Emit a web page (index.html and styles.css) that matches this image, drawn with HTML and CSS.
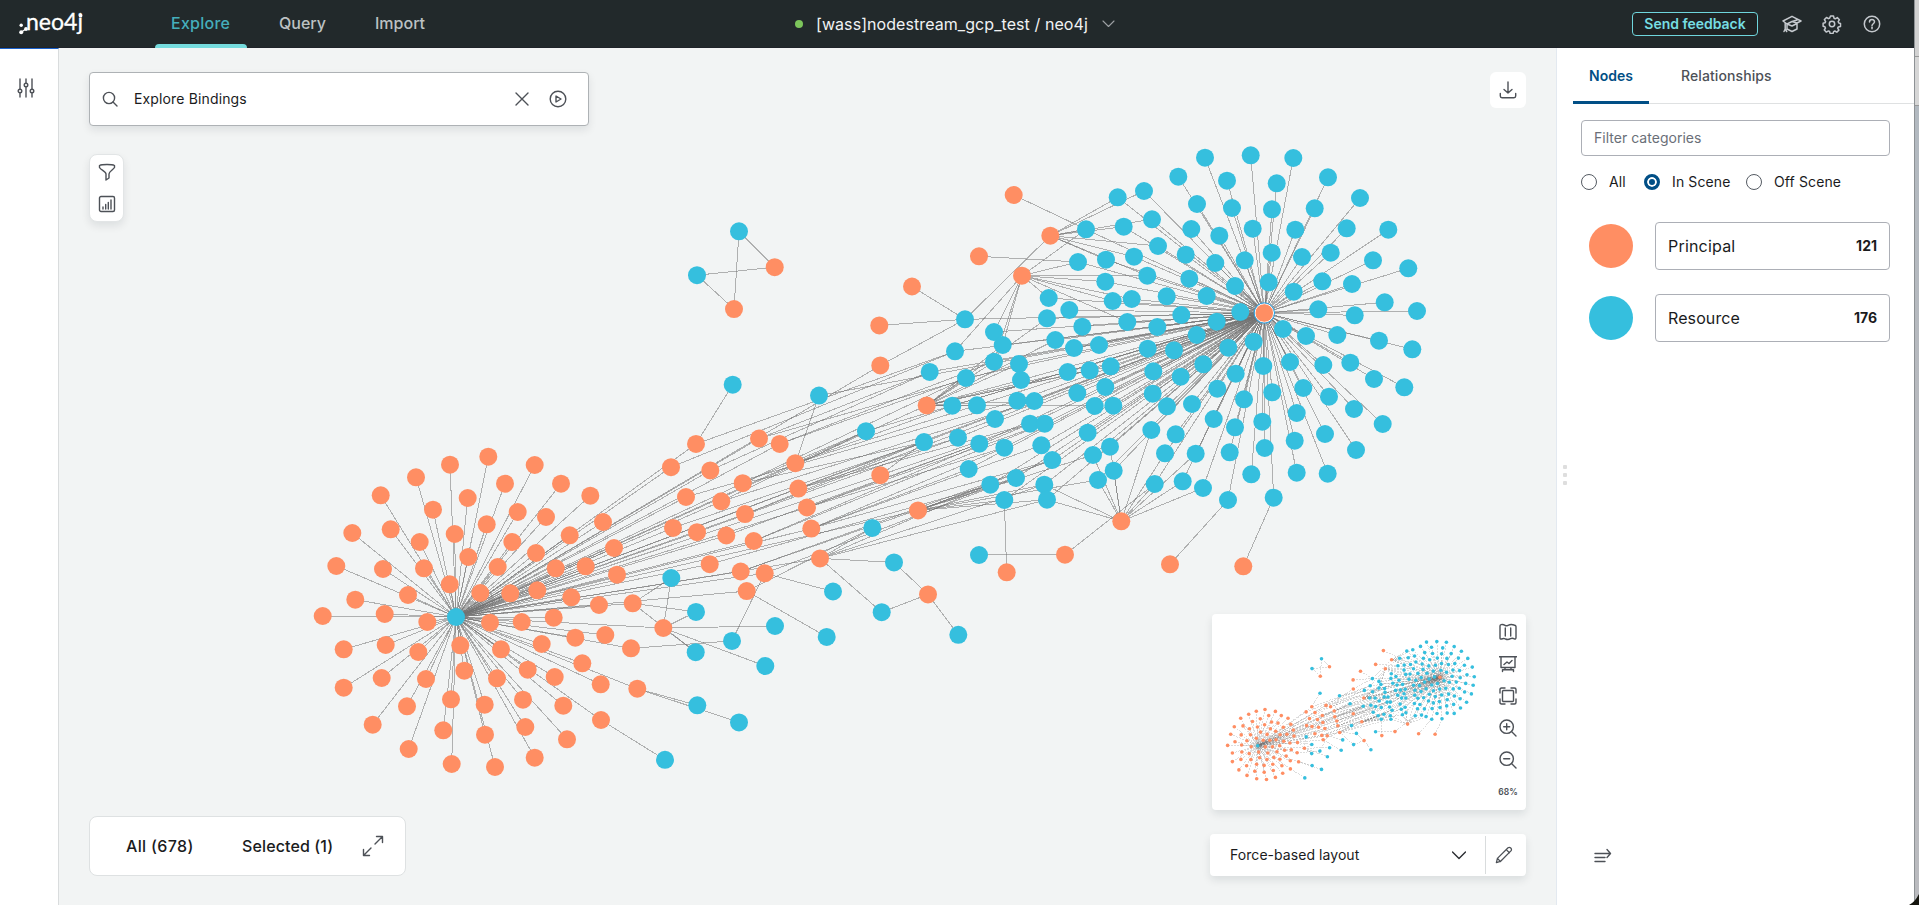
FILE: index.html
```html
<!DOCTYPE html>
<html lang="en">
<head>
<meta charset="utf-8">
<title>neo4j Explore</title>
<link rel="stylesheet" href="styles.css">
</head>
<body>
<div class="window">
  <div class="app">
    <header class="topbar">
      <svg class="logo" width="72" height="32" viewBox="0 0 72 32">
        <g fill="#fff"><circle cx="3.200" cy="17.200" r="1.700"/><circle cx="3.200" cy="24.300" r="2"/><circle cx="8" cy="21" r="1.900"/></g>
        <path d="M3.200 24.300 8.500 20.500" stroke="#fff" stroke-width="1.300"/>
        <text class="wordmark" x="8" y="22" textLength="57" lengthAdjust="spacingAndGlyphs">neo4j</text>
        <circle cx="62.500" cy="7.700" r="1.900" fill="#fff"/>
      </svg>
      <nav class="tabs">
        <a class="tab active">Explore</a>
        <a class="tab query">Query</a>
        <a class="tab import">Import</a>
      </nav>
      <div class="database">
        <span class="status"></span>
        <span class="db-name">[wass]nodestream_gcp_test / neo4j</span>
        <svg width="13" height="8" viewBox="0 0 13 8" class="line db-chevron"><path d="M1 1l5.500 5.500L12 1"/></svg>
      </div>
      <div class="actions">
        <button class="feedback">Send feedback</button>
        <svg width="20" height="20" viewBox="0 0 20 20" class="line light"><path d="M1 7l9-4.700L19 7l-4 2-5-1.500L5 10 1 7zM5 10v5l5 2.500 5-2.500V9M10 7.500l5-1.500M5 10l5 2 5-2.500M3.200 9v6M2 17.500l1.200-2.500 1.500 2.500"/></svg>
        <svg width="20" height="20" viewBox="0 0 20 20" class="line light"><path d="M8.500 2h3l.5 2.200 1.300.6 2-1.200 2.100 2.100-1.200 2 .6 1.300 1.700.4v3l-2.200.5-.6 1.200 1.200 2-2.100 2.100-2-1.200-1.200.6-.5 1.800h-3l-.5-1.900-1.200-.6-2 1.200-2.100-2.100 1.200-2-.6-1.200-1.800-.5v-3l1.900-.5.6-1.200-1.200-2 2.100-2.100 2 1.200 1.200-.6z"/><circle cx="10" cy="10" r="2.700"/></svg>
        <svg width="20" height="20" viewBox="0 0 20 20" class="line light"><circle cx="10" cy="10" r="7.700"/><path d="M7.500 8c0-3.300 5-3.300 5-.2 0 2-2.500 1.900-2.500 3.900"/><path d="M10 13.300v1.400"/></svg>
      </div>
    </header>

    <div class="body">
      <aside class="rail">
        <svg width="18" height="20" viewBox="0 0 18 20" class="line"><path d="M3 1v10M3 15v4M9 1v4M9 9v10M15 1v10M15 15v4"/><circle cx="3" cy="13" r="1.800"/><circle cx="9" cy="7" r="1.800"/><circle cx="15" cy="13" r="1.800"/></svg>
      </aside>

      <main class="scene">
        <svg class="graph" id="graph" width="1498" height="857" viewBox="59 48 1498 857"></svg>

        <div class="overlay">
          <div class="row top">
            <div class="left-tools">
              <div class="search">
                <svg width="16" height="16" viewBox="0 0 16 16" class="line"><circle cx="7" cy="7" r="5.600"/><path d="M11 11l4 4"/></svg>
                <span class="query-text">Explore Bindings</span>
                <svg width="14" height="14" viewBox="0 0 14 14" class="line"><path d="M1 1l12 12M13 1L1 13"/></svg>
                <svg width="18" height="18" viewBox="0 0 18 18" class="line play"><circle cx="9" cy="9" r="7.800"/><path d="M7 6v6l5-3z"/></svg>
              </div>
              <div class="toolbox">
                <svg width="18" height="18" viewBox="0 0 18 18" class="line"><path d="M1.500 2.500C4 1.200 14 1.200 16.500 2.500v2C15 7 11 8.500 11 11v4l-3 2v-6C8 8.500 3 7 1.500 4.500z"/></svg>
                <svg width="18" height="18" viewBox="0 0 18 18" class="line"><rect x="1.500" y="1.500" width="15" height="15" rx="1.500"/><path d="M5 14v-2M7.700 14V9.500M10.300 14V7.500M13 14V5"/></svg>
              </div>
            </div>
            <button class="download"><svg width="18" height="18" viewBox="0 0 18 18" class="line"><path d="M9 1v11M5 8.500L9 12l4-3.500M1.300 12.500V15q0 1.700 1.700 1.700h12q1.700 0 1.700-1.700v-2.500"/></svg></button>
          </div>

          <div class="row bottom">
            <div class="counts">
              <span class="count-all">All (678)</span>
              <span class="count-selected">Selected (1)</span>
              <svg width="22" height="22" viewBox="0 0 22 22" class="line"><path d="M13 9l7.500-7.500M14.500 1.500h6v6M9 13l-7.500 7.500M1.500 14.500v6h6"/></svg>
            </div>
            <div class="right-tools">
              <div class="minimap">
                <svg class="mini" id="mini" width="280" height="196" viewBox="1212 614 280 196"></svg>
                <div class="mini-tools">
                  <svg width="18" height="18" viewBox="0 0 18 18" class="line"><path d="M1 3q0-1 1-1.300 2-.7 4 .6 1.300.9 3 0 3-1.500 6-.3 2 .5 2 1.500v11q0 1.700-1.500 1.500-2-1.200-4-.3-2.500 1.500-5 .3-1.700-1-4 0-1.500.3-1.500-1zM6.300 5v8M11.700 5v8"/></svg>
                  <svg width="18" height="18" viewBox="0 0 18 18" class="line"><path d="M0 1.700h18M2 2v10.500h14V2M5 9.500l3-2.500 2 1.500 3-3M6 12.500v2.200M12 12.500v2.200M3.500 16.500v-1.800h11v1.800"/></svg>
                  <svg width="18" height="18" viewBox="0 0 18 18" class="line"><rect x="3.500" y="3.500" width="11" height="11" rx="1"/><path d="M1 6V2.500Q1 1 2.500 1H6M12 1h3.500Q17 1 17 2.500V6M17 12v3.500q0 1.500-1.500 1.500H12M6 17H2.500Q1 17 1 15.500V12"/></svg>
                  <svg width="18" height="18" viewBox="0 0 18 18" class="line"><circle cx="7.700" cy="7.700" r="6.700"/><path d="M12.500 12.500L17 17M4.700 7.700h6M7.700 4.700v6"/></svg>
                  <svg width="18" height="18" viewBox="0 0 18 18" class="line"><circle cx="7.700" cy="7.700" r="6.700"/><path d="M12.500 12.500L17 17M4.700 7.700h6"/></svg>
                  <span class="zoom">68%</span>
                </div>
              </div>
              <div class="layout-select">
                <span class="layout-name">Force-based layout</span>
                <svg width="14" height="9" viewBox="0 0 14 9" class="line dark"><path d="M.5 1L7 7.500 13.500 1"/></svg>
                <div class="edit"><svg width="18" height="18" viewBox="0 0 20 20" class="line"><path d="M1.500 18.500l1.200-4.800L14.500 2q1.500-1.200 3 .2t.2 3.200L6 17.200zM12.500 4l3.500 3.500M2.700 13.700L6 17.200"/></svg></div>
              </div>
            </div>
          </div>
        </div>
      </main>

      <aside class="panel">
        <div class="grip"><i></i><i></i><i></i></div>
        <div class="panel-main">
          <div class="panel-tabs">
            <a class="ptab on">Nodes</a>
            <a class="ptab rel">Relationships</a>
          </div>
          <div class="panel-content">
            <div class="filter">Filter categories</div>
            <div class="radios">
              <span class="radio"></span><span class="rl r1">All</span>
              <span class="radio checked"></span><span class="rl r2">In Scene</span>
              <span class="radio"></span><span class="rl r3">Off Scene</span>
            </div>
            <div class="category"><span class="swatch principal"></span><div class="cat-box"><span class="cat-name n1">Principal</span><b>121</b></div></div>
            <div class="category"><span class="swatch resource"></span><div class="cat-box"><span class="cat-name n2">Resource</span><b>176</b></div></div>
          </div>
          <svg width="18" height="16" viewBox="0 0 18 16" class="line collapse"><path d="M1 5.500h15.500M13 1.500l3.500 4-3.500 4M1 9.500h10M1 13.500h10"/></svg>
        </div>
      </aside>
    </div>
  </div>
  <div class="desktop-edge"><div class="e1"></div><div class="e2"></div><div class="e3"></div></div>
  <svg class="corner" width="10" height="11" viewBox="0 0 10 11"><path d="M0 11Q6 8 10 0v11z" fill="#15150e"/></svg>
</div>
<script src="graph.js"></script>
</body>
</html>
```

FILE: styles.css
```css
* { box-sizing: border-box; }
body { margin: 0; font-family: Inter, "Liberation Sans", sans-serif; font-size: 14px; color: #1a1b1d; overflow: hidden; }
.window { display: flex; width: 1919px; height: 905px; position: relative; overflow: hidden; }
.app { width: 1914px; display: flex; flex-direction: column; }
.line { fill: none; stroke: #4d5157; stroke-width: 1.4; stroke-linecap: round; stroke-linejoin: round; flex: none; display: block; }
.line.light { stroke: #c4c8cd; stroke-width: 1.5; }
.line.dark { stroke: #2a2c30; }

.topbar { height: 48px; background: #22292b; border-bottom: 1px solid #1f2329; display: grid; grid-template-columns: 155px 640px 1fr auto; align-items: center; }
.logo { margin-left: 18px; margin-top: -1px; overflow: visible; }
.wordmark { font: 400 23px/28px Lato, sans-serif; fill: #fff; stroke: #fff; stroke-width: .3; }
.tabs { display: flex; height: 48px; align-items: stretch; }
.tab { font-size: 16px; font-weight: 500; line-height: 47px; color: #bdc1c3; white-space: nowrap; }
.tab.active { width: 92px; padding-left: 16px; color: #45aebb; position: relative; letter-spacing: .25px; }
.tab.active::after { content: ""; position: absolute; left: 0; bottom: 0; width: 92px; height: 4px; background: #75dbdd; border-radius: 4px 4px 0 0; }
.tab.query { margin-left: 32px; width: 96px; }
.database { display: flex; align-items: center; color: #f0f2f3; }
.status { width: 8px; height: 8px; border-radius: 50%; background: #7cc55b; margin-right: 13px; margin-top: -1px; }
.db-name { font-size: 16px; width: 272px; white-space: nowrap; letter-spacing: .07px; }
.db-chevron { margin-left: 14px; stroke: #9da1a4; stroke-width: 1.1; }
.actions { display: flex; align-items: center; gap: 20px; padding-right: 32px; }
.feedback { width: 126px; height: 24px; margin-right: 4px; padding: 0; border: 1px solid #6fd5dc; border-radius: 4px; background: #1f2223; color: #76dde2; font: 600 14px/20px Inter, sans-serif; letter-spacing: -.02px; white-space: nowrap; }

.body { flex: 1; display: flex; min-height: 0; }
.rail { width: 59px; background: #fff; border-top: 1px solid #1a62cc; border-right: 1px solid #d9dcdd; padding: 29px 0 0 17px; }
.scene { width: 1498px; background: #f2f4f4; position: relative; border-right: 1px solid #e3e9f0; }
.graph { position: absolute; left: 0; top: 0; }
.overlay { position: absolute; inset: 0; padding: 24px 30px 29px 30px; display: flex; flex-direction: column; justify-content: space-between; }
.row { display: flex; justify-content: space-between; }
.row.bottom { align-items: flex-end; }

.search { width: 500px; height: 54px; background: #fff; border: 1px solid #aeb2b5; border-radius: 4px; box-shadow: 0 4px 8px rgba(12,26,37,.09); display: flex; align-items: center; padding: 0 21px 1px 12px; }
.query-text { flex: 1; margin-left: 16px; letter-spacing: .14px; }
.search .play { margin-left: 20px; }
.toolbox { width: 35px; height: 68px; margin-top: 28px; background: #fff; border: 1px solid #e2e5e6; border-radius: 8px; box-shadow: 0 4px 8px rgba(12,26,37,.09); display: flex; flex-direction: column; align-items: center; justify-content: center; gap: 14px; }
.download { width: 36px; height: 36px; border: 0; border-radius: 6px; background: #fff; display: flex; align-items: center; justify-content: center; padding: 0; }

.counts { width: 317px; height: 60px; background: #fff; border: 1px solid #dee1e2; border-radius: 8px; display: flex; align-items: center; padding-left: 36px; font-size: 16px; font-weight: 500; white-space: nowrap; }
.count-all { width: 116px; letter-spacing: .35px; }
.count-selected { width: 120px; letter-spacing: .12px; }
.right-tools { display: flex; flex-direction: column; align-items: flex-end; gap: 24px; }
.minimap { width: 314px; height: 196px; background: #fff; border-radius: 4px; box-shadow: 0 4px 8px rgba(12,26,37,.1); display: flex; }
.mini-tools { width: 32px; padding-top: 9px; display: flex; flex-direction: column; align-items: center; gap: 14px; }
.zoom { font-size: 8.500px; line-height: 18px; color: #4d5157; font-weight: 600; }
.layout-select { width: 316px; height: 42px; background: #fff; border-radius: 4px; box-shadow: 0 4px 8px rgba(12,26,37,.1); display: flex; align-items: center; padding-left: 20px; }
.layout-name { width: 222px; white-space: nowrap; letter-spacing: .06px; padding-bottom: 1px; }
.edit { margin-left: 19px; width: 40px; height: 38px; border-left: 1px solid #d9dcdd; display: flex; align-items: center; padding-left: 9px; }

.panel { width: 357px; background: #fff; display: flex; }
.grip { width: 16px; padding: 417px 0 0 6px; display: flex; flex-direction: column; gap: 4px; }
.grip i { width: 4px; height: 4px; border-radius: 1px; background: #dedede; }
.panel-main { flex: 1; display: flex; flex-direction: column; }
.panel-tabs { height: 56px; border-bottom: 1px solid #dfe1e2; display: flex; }
.ptab { height: 56px; line-height: 56px; font-weight: 500; color: #4d5157; white-space: nowrap; letter-spacing: .1px; }
.ptab.on { width: 76px; padding-left: 16px; color: #014f86; border-bottom: 3px solid #014f86; font-weight: 600; letter-spacing: 0; border-radius: 2px 2px 0 0; }
.ptab.rel { margin-left: 32px; }
.panel-content { padding: 16px 24px 0 8px; flex: 1; }
.filter { height: 36px; border: 1px solid #acafb6; border-radius: 4px; line-height: 34px; padding-left: 12px; color: #6a6f78; letter-spacing: .02px; }
.radios { height: 16px; margin-top: 18px; display: flex; align-items: center; white-space: nowrap; }
.radio { width: 16px; height: 16px; border: 1px solid #555b63; border-radius: 50%; flex: none; }
.radio.checked { border: 3px solid #014f86; background: #014f86; box-shadow: inset 0 0 0 2px #fff; }
.rl { margin-left: 12px; padding-bottom: 1px; letter-spacing: .12px; }
.r1 { width: 35px; }
.r2 { width: 74px; }
.category { display: flex; align-items: center; justify-content: space-between; height: 48px; margin-top: 24px; padding-left: 8px; }
.radios + .category { margin-top: 32px; }
.swatch { width: 44px; height: 44px; border-radius: 50%; }
.principal { background: #ff8e63; }
.resource { background: #35bfde; }
.cat-box { width: 235px; height: 48px; border: 1px solid #acafb6; border-radius: 4px; display: flex; justify-content: space-between; align-items: center; padding: 0 12px 1px; font-size: 16px; }
.cat-name { letter-spacing: .1px; }
.n1 { letter-spacing: .2px; }
.cat-box b { font-size: 14px; }
.collapse { margin: 0 0 41px 21px; }

.desktop-edge { width: 5px; display: flex; flex-direction: column; border-left: 1px solid #8e9295; }
.e1 { height: 57px; background: #d2d2d2; border-bottom: 1px solid #999; }
.e2 { height: 49px; background: #d6d6d6; border-bottom: 1px solid #999; }
.e3 { flex: 1; background: linear-gradient(#b2b9c0, #b9babe 50%, #babbbf); }
.corner { position: absolute; right: 0; bottom: 0; }

.edge { stroke: #727272; stroke-opacity: .52; stroke-width: 1; shape-rendering: crispEdges; }
.mini .edge { stroke-opacity: .3; stroke-width: .8; stroke-dasharray: 2 1; }
.p { fill: #ff8e63; }
.r { fill: #35bfde; }
.selected { stroke: #fff; stroke-width: 1; }
.ring { fill: none; stroke: #2aa3e8; stroke-width: 1; }
```

FILE: graph.js
```js
// Nodes are stored per sector in local units: [originX, originY, unitX, unitY].
const T = 1 / 3, LEFT = [300, 440, T, T], MID = [640, 200, T, 1 / 2.751],
  RIGHT = [900, 180, T, T], NE = [1140, 130, T, T], SE = [1140, 340, T, T];
const read = (s, text) => text.trim().split(/\s+/).map(p => {
  const [x, y] = p.split(',').map(Number);
  return [s[0] + x * s[2], s[1] + y * s[3]];
});

const resourceHub = [456, 617], principalHub = [1264.3, 313];

const leftPrincipals = read(LEFT, `565,50 450,74 704,75 348,112 615,131 783,131 242,166 503,174 871,167 399,209
653,216 738,231 909,246 560,253 272,268 464,282 157,279 359,306 637,306 809,286 505,351 708,339 942,324 109,378
249,387 372,385 593,381 767,385 857,379 951,404 449,433 541,459 631,460 712,451 324,465 166,479 814,472 897,495
998,490 68,528 254,522 382,546 570,548 665,546 761,533 1090,564 131,628 257,615 355,636 481,616 603,628 725,612
826,593 916,585 993,625 847,670 683,689 493,692 591,715 764,711 902,733 1012,746 245,714 131,743 378,717 321,799
453,778 554,794 669,779 790,797 218,854 430,871 555,884 676,861 903,840 801,898 326,927 704,953 455,972 585,981`);

const bridgePrincipals = read(MID, `168,671 93,735 357,656 419,671 211,744 466,724 308,779 138,817 244,829 475,794
315,864 501,846 99,902 171,914 259,923 341,938 514,904 209,1002 302,1022 374,1027 320,1076 540,986 721,757
834,854 860,565 721,455`);

const otherPrincipals = [
  ...read(MID, '404,185 282,300 718,345 816,238 864,1085'),
  ...read(RIGHT, '341,45 451,167 237,229 366,287 664,1024 495,1124 320,1177'),
  ...read(SE, '90,673 310,679')];

const hubResources = [
  ...read(MID, '678,636 852,666 869,473 537,538'),
  ...read(RIGHT, `653,52 558,148 671,140 534,246 618,239 702,230 616,305 446,354 638,363 695,357 508,390 195,418
441,415 682,426 547,440 282,456 308,495 466,480 522,504 597,495 165,514 282,545 357,552 198,594 363,600 503,576
569,571 632,559 616,621 532,639 157,677 231,676 352,662 403,663 584,678 640,677 285,717 390,731 434,731 174,773
238,791 313,803 424,796 457,840 563,758 630,800 579,825 641,872 206,867 348,894 271,914 433,914 594,900 313,960
441,959`),
  ...read(NE, `195,83 332,76 460,84 115,140 261,152 410,160 564,142 12,183 171,222 276,234 396,238 524,235 660,204
36,268 154,297 238,317 338,296 466,299 620,295 745,299 54,348 137,374 226,399 314,391 395,368 486,381 572,368
699,391 805,415 22,437 148,446 285,468 386,457 461,485 547,454 636,462 80,499 200,498 301,546 734,517 831,543
124,555 230,575 535,538 644,556 52,591 170,615 429,597 498,618 592,615 717,632`),
  ...read(SE, `23,26 102,31 265,23 341,5 817,28 40,94 122,110 190,73 287,101 370,78 450,66 550,75 631,68 702,117
793,142 38,161 81,199 156,192 232,146 312,178 397,157 490,144 567,170 642,207 728,252 34,270 107,283 221,237
285,262 367,245 470,219 464,302 555,282 648,330 75,340 167,341 269,337 374,324 44,432 128,424 189,444 334,403
470,398 563,401 264,480 401,473`)];

const otherResources = [
  ...read(MID, `297,86 171,207 278,508 94,1040 168,1133 167,1244 276,1213 405,1172 376,1282 172,1390 297,1437
75,1540 579,1077 560,1202 725,1134 762,997 697,902 955,1196`),
  ...read(RIGHT, '237,1125')];

const principals = [...leftPrincipals, ...bridgePrincipals, ...otherPrincipals];
const resources = [...hubResources, ...otherResources];

// principal position: positions of the resources it is bound to
const bindings = `
696,444: 955,351 733,385
671,467: 955,351
759,438: 930,372 1019,364
780,444: 994,362 966,378
710,470: 930,372
795,463: 819,396 866,431 952,406 977,405
743,483: 866,431 966,378 924,442
686,497: 1017,401
721,501: 866,431 1034,401
798,489: 924,442 1030,424 958,438
745,514: 924,442 995,419
807,507: 1045,424 979,444 1004,448
673,528: 924,442
697,532: 958,438
726,535: 979,444
754,541: 1030,424 1045,424
811,529: 1041,445 1004,448 969,469 1052,460
710,564: 1016,478
741,571: 990,485 1052,460
765,573: 1016,478 732,641 833,591
747,591: 872,528 827,637
820,558: 894,562 882,612 872,528 1047,500 990,485 1044,485
880,475: 924,442 1030,424
918,510: 990,485 1016,478 1004,500 1047,500 1044,485 1098,480 1093,455 1052,460
927,405: 952,406 977,405 994,362 1019,364 1021,380 966,378 1003,345 1034,401 1095,406 1068,372 1055,340 1047,318 1110,366 1090,372
880,365: 965,319
880,315: 965,319
912,287: 965,319
1050,236: 1117,197 1144,191 1086,229 1124,227 1152,219 1158,246 1134,257 1106,260 1147,276 965,319
1022,276: 1086,229 1078,262 1105,282 1049,298 1113,301 1132,299 1127,322 994,332 1003,345 955,351 1147,276 994,362
1014,195: 1086,229
979,256: 1078,262
1121,521: 1044,485 1047,500 1093,455 1098,480 1114,471 1110,447 1155,484 1165,453 1151,430 1183,481 1203,488 1196,454
1065,555: 979,555 1155,484
1007,572: 1004,500
1170,564: 1228,500
1243,566: 1274,498
775,267: 739,231 697,275
734,309: 739,231 697,275
928,594: 894,562 882,612 958,635
663,628: 671,578 696,612 696,652 775,626 765,666
633,603: 671,578 696,612 696,652
631,648: 732,641
637,689: 697,705 739,722
601,720: 665,760`;

const nearest = (list, [x, y]) => list.reduce((a, b) =>
  Math.hypot(a[0] - x, a[1] - y) <= Math.hypot(b[0] - x, b[1] - y) ? a : b);
const edges = [
  ...leftPrincipals.map(p => [p, resourceHub]),
  ...bridgePrincipals.map(p => [p, resourceHub]),
  ...hubResources.map(p => [p, principalHub]),
  [resourceHub, principalHub]];
bindings.trim().split('\n').forEach(row => {
  const [from, to] = row.split(':');
  const p = nearest(principals, from.split(',').map(Number));
  to.trim().split(' ').forEach(t => edges.push([p, nearest(resources, t.split(',').map(Number))]));
});

function draw(id, k, dx, dy, radius) {
  const at = ([x, y]) => [(x * k + dx).toFixed(1), (y * k + dy).toFixed(1)];
  const dot = (pt, cls, r = radius) => { const [x, y] = at(pt); return `<circle class="${cls}" cx="${x}" cy="${y}" r="${r}"/>`; };
  let out = edges.map(([a, b]) => {
    const [x1, y1] = at(a), [x2, y2] = at(b);
    return `<line class="edge" x1="${x1}" y1="${y1}" x2="${x2}" y2="${y2}"/>`;
  }).join('');
  out += principals.map(p => dot(p, 'p')).join('') + resources.map(p => dot(p, 'r')).join('');
  out += dot(resourceHub, 'r');
  out += k === 1 ? dot(principalHub, 'p selected', 9.3) + dot(principalHub, 'ring', 10.2) : dot(principalHub, 'p');
  document.getElementById(id).innerHTML = out;
}
draw('graph', 1, 0, 0, 9);
draw('mini', 0.2254, 1154.9, 606.6, 1.8);
```
